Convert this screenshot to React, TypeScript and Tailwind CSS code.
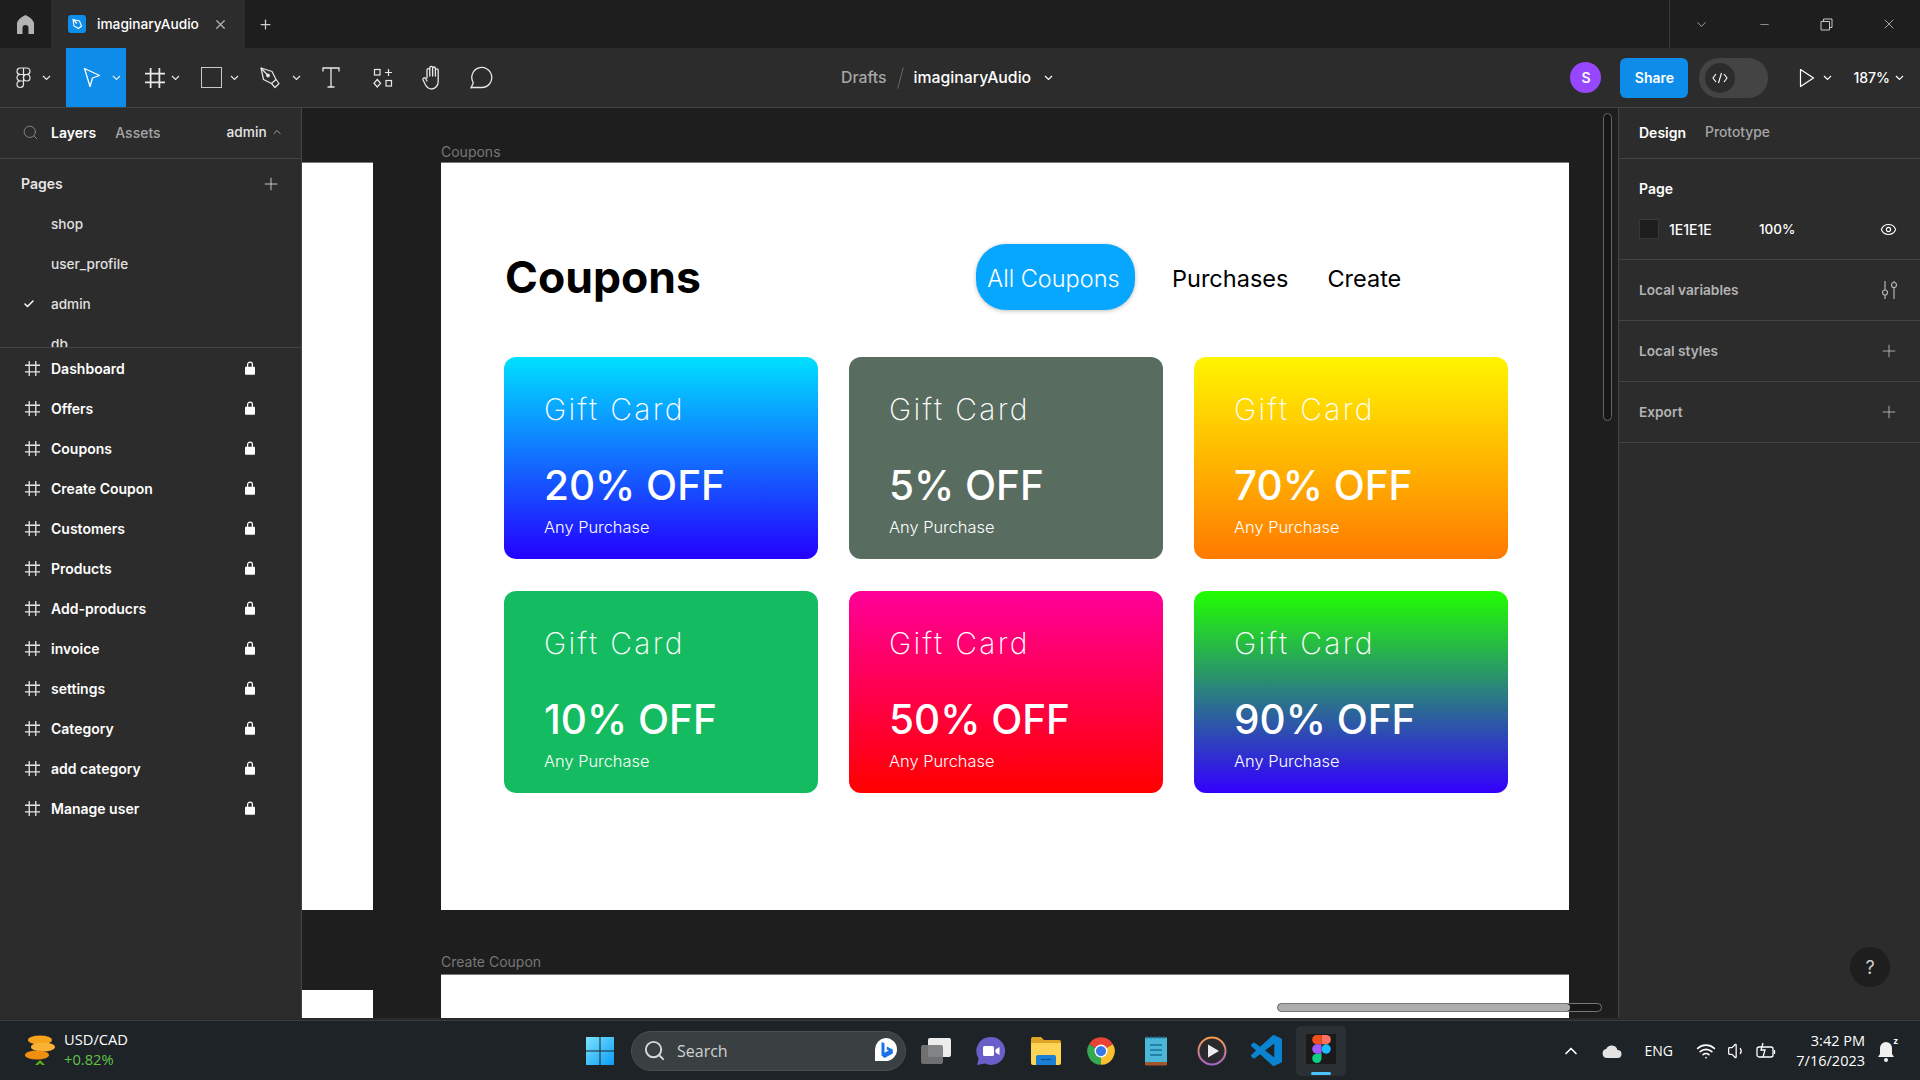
import { X, Plus, Search, Check, ChevronDown, ChevronUp, Eye, Minus, Wifi, Volume1 } from "lucide-react";

const pages = ["shop", "user_profile", "admin", "db"];
const layers = ["Dashboard", "Offers", "Coupons", "Create Coupon", "Customers", "Products", "Add-producrs", "invoice", "settings", "Category", "add category", "Manage user"];

const cards = [
  { off: "20% OFF", bg: "bg-linear-to-b/srgb from-[#00e0ff] to-[#2400ff]" },
  { off: "5% OFF", bg: "bg-[#586d60]" },
  { off: "70% OFF", bg: "bg-linear-to-b/srgb from-[#fff500] to-[#ff7a00]" },
  { off: "10% OFF", bg: "bg-[#14bb60]" },
  { off: "50% OFF", bg: "bg-linear-to-b/srgb from-[#ff0099] to-[#ff0000]" },
  { off: "90% OFF", bg: "bg-linear-to-b/srgb from-[#22ff00] to-[#3300ff]" },
];

function Chev({ className = "" }: { className?: string }) {
  return (
    <svg width="9" height="6" viewBox="0 0 9 6" fill="none" stroke="currentColor" strokeWidth="1.2" className={className}>
      <path d="M1 1l3.5 3.5L8 1" />
    </svg>
  );
}

function FrameIcon({ size = 16, stroke = 1.2 }: { size?: number; stroke?: number }) {
  return (
    <svg width={size} height={size} viewBox="0 0 16 16" fill="none" stroke="currentColor" strokeWidth={stroke}>
      <path d="M4.5 0v16M11.5 0v16M0 4.5h16M0 11.5h16" />
    </svg>
  );
}

function LockIcon() {
  return (
    <svg width="10" height="14" viewBox="0 0 10 14" fill="white">
      <path d="M2.6 6V3.6a2.4 2.4 0 0 1 4.8 0V6" fill="none" stroke="white" strokeWidth="1.3" />
      <rect y="5.8" width="10" height="8" rx="0.8" />
    </svg>
  );
}

function FigmaOutline() {
  return (
    <svg width="15" height="22" viewBox="0 0 15 22" fill="none" stroke="#e6e6e6" strokeWidth="1.2">
      <path d="M7.5 1H4.25a3.25 3.25 0 0 0 0 6.5H7.5V1zM7.5 1h3.25a3.25 3.25 0 0 1 0 6.5H7.5M7.5 7.5H4.25a3.25 3.25 0 0 0 0 6.5H7.5V7.5zM7.5 14H4.25a3.25 3.25 0 1 0 3.25 3.25V14z" />
      <circle cx="10.75" cy="10.75" r="3.25" />
    </svg>
  );
}

function FigmaColor() {
  return (
    <svg width="19" height="28" viewBox="0 0 38 57">
      <path fill="#1abcfe" d="M19 28.5a9.5 9.5 0 1 1 19 0 9.5 9.5 0 0 1-19 0z" />
      <path fill="#0acf83" d="M0 47.5A9.5 9.5 0 0 1 9.5 38H19v9.5a9.5 9.5 0 1 1-19 0z" />
      <path fill="#ff7262" d="M19 0v19h9.5a9.5 9.5 0 1 0 0-19H19z" />
      <path fill="#f24e1e" d="M0 9.5A9.5 9.5 0 0 0 9.5 19H19V0H9.5A9.5 9.5 0 0 0 0 9.5z" />
      <path fill="#a259ff" d="M0 28.5A9.5 9.5 0 0 0 9.5 38H19V19H9.5A9.5 9.5 0 0 0 0 28.5z" />
    </svg>
  );
}

function Tool({ w, children, chev }: { w: string; children: React.ReactNode; chev?: boolean }) {
  return (
    <div className={`flex h-full items-center justify-center text-[#e8e8e8] ${w}`}>
      {children}
      {chev && <Chev />}
    </div>
  );
}

function Toolbar() {
  return (
    <div className="flex h-[60px] items-center border-b border-[#444] bg-[#2c2c2c] text-white">
      <Tool w="w-[66px] gap-[11px]" chev>
        <FigmaOutline />
      </Tool>
      <Tool w="w-[60px] gap-[11px] bg-[#0d8ce9] pl-[11px]" chev>
        <svg width="18" height="22" viewBox="0 0 18 22" fill="none" stroke="white" strokeWidth="1.3" strokeLinejoin="round">
          <path d="M1.5 1.5L16.5 8.5 9.5 11l-2.5 8.5z" />
        </svg>
      </Tool>
      <Tool w="w-[64px] gap-[6px] pl-[8px]" chev>
        <FrameIcon size={20} stroke={1.4} />
      </Tool>
      <Tool w="w-[60px] gap-[8px]" chev>
        <div className="size-[21px] border-[1.5px] border-[#c9c9c9]" />
      </Tool>
      <Tool w="w-[60px] gap-[11px]" chev>
        <svg width="21" height="22" viewBox="0 0 21 22" fill="none" stroke="#e8e8e8" strokeWidth="1.2" strokeLinejoin="round">
          <path d="M1 1l11 3.5 4 8-4.5 4-8-4z" />
          <path d="M1 1l6.5 7" />
          <circle cx="8" cy="8.5" r="1.3" fill="#e8e8e8" />
          <path d="M11.5 16.5l3.5 4 4-4-3-4" />
        </svg>
      </Tool>
      <Tool w="w-[42px]">
        <svg width="18" height="21" viewBox="0 0 18 21" fill="none" stroke="#e8e8e8" strokeWidth="1.3">
          <path d="M1 4.5V1h16v3.5M9 1v19M5.5 20h7" />
        </svg>
      </Tool>
      <Tool w="w-[50px] ml-[6px]">
        <svg width="20" height="20" viewBox="0 0 20 20" fill="none" stroke="#e8e8e8" strokeWidth="1.2">
          <rect x="1.5" y="1.5" width="5.5" height="5.5" />
          <path d="M15.5 1v7M12 4.5h7" />
          <path d="M4.25 11.5l3.3 3.75-3.3 3.75-3.3-3.75z" />
          <rect x="13" y="12.5" width="5.5" height="5.5" />
        </svg>
      </Tool>
      <Tool w="w-[48px] ml-[1px]">
        <svg width="24" height="25" viewBox="0 0 24 25" fill="none" stroke="#e8e8e8" strokeWidth="1.3" strokeLinecap="round" strokeLinejoin="round">
          <path d="M6 13V5a1.4 1.4 0 0 1 2.8 0v6M8.8 11V2.8a1.4 1.4 0 0 1 2.8 0V11M11.6 11V3.4a1.4 1.4 0 0 1 2.8 0V11M14.4 11V5.2a1.4 1.4 0 0 1 2.8 0v11c0 4.5-3 7.8-6.6 7.8-3 0-4.6-1.6-6-4L2 14.8c-.7-1.6 1.6-2.8 2.6-1.3L6 16" />
        </svg>
      </Tool>
      <Tool w="w-[50px] -ml-px">
        <svg width="23" height="23" viewBox="0 0 23 23" fill="none" stroke="#e8e8e8" strokeWidth="1.3" strokeLinejoin="round">
          <path d="M1 22l2.3-5.2A10 10 0 1 1 12 21.5H1z" />
        </svg>
      </Tool>

      <div className="ml-[335px] flex items-center text-[15.8px] font-medium">
        <span className="text-[#a6a6a6]">Drafts</span>
        <span className="mx-[13px] h-[22px] w-px rotate-[15deg] bg-[#666]" />
        <span className="text-white">imaginaryAudio</span>
        <Chev className="ml-[13px]" />
      </div>

      <div className="ml-auto flex items-center">
        <div className="flex size-[31px] items-center justify-center rounded-full bg-[#9747ff] text-[14px] font-semibold">S</div>
        <button className="ml-[19px] h-[40px] w-[68px] rounded-[6px] bg-[#0d8ce9] text-[14px] font-semibold">Share</button>
        <div className="ml-[11px] flex h-[40px] w-[69px] items-center rounded-full bg-[#444] pl-[6px]">
          <div className="flex size-[30px] items-center justify-center rounded-full bg-[#2c2c2c]">
            <svg width="16" height="12" viewBox="0 0 16 12" fill="none" stroke="white" strokeWidth="1.1">
              <path d="M4 2L1 6l3 4M12 2l3 4-3 4M9.5 1L6.5 11" />
            </svg>
          </div>
        </div>
        <svg width="16" height="20" viewBox="0 0 16 20" fill="none" stroke="white" strokeWidth="1.2" strokeLinejoin="round" className="ml-[31px]">
          <path d="M1.5 1.5L14.5 10 1.5 18.5z" />
        </svg>
        <Chev className="ml-[8px]" />
        <span className="ml-[21px] text-[14px] font-medium">187%</span>
        <Chev className="ml-[5px] mr-[16px]" />
      </div>
    </div>
  );
}

function TitleBar() {
  return (
    <div className="flex h-[48px] items-center bg-[#1e1e1e] text-white">
      <div className="flex w-[51px] justify-center">
        <svg width="17" height="19" viewBox="0 0 17 19" fill="#b3b3b3">
          <path fillRule="evenodd" d="M8.5 0C5 1.5 1 4.5 0 8v11h5.5v-6a3 3 0 0 1 6 0v6H17V8C16 4.5 12 1.5 8.5 0z" />
        </svg>
      </div>
      <div className="flex h-full w-[194px] items-center bg-[#2c2c2c] pl-[17px]">
        <div className="flex size-[18px] items-center justify-center rounded-[3px] bg-[#0d8ce9]">
          <svg width="12" height="12" viewBox="0 0 12 12" fill="none" stroke="white" strokeWidth="1.1">
            <path d="M2 1.5l6.5 1.5 2 5-3 2.5-4.5-2.5zM2 1.5l4 4" />
          </svg>
        </div>
        <span className="ml-[11px] text-[13.7px] font-medium">imaginaryAudio</span>
        <X size={15} className="ml-[14px] text-[#b3b3b3]" strokeWidth={2} />
      </div>
      <Plus size={15} className="ml-[13px] text-[#d0d0d0]" strokeWidth={2} />
      <div className="ml-auto flex h-full w-[251px] items-center border-l border-[#383838] text-[#c8c8c8]">
        <ChevronDown size={15} strokeWidth={1.2} className="ml-[24px]" />
        <Minus size={13} strokeWidth={1.2} className="ml-[49px]" />
        <svg width="13" height="13" viewBox="0 0 13 13" fill="none" stroke="currentColor" className="ml-[49px]">
          <path d="M1 3.5h8.5V12H1zM3.5 3.5V1H12v8.5H9.5" />
        </svg>
        <X size={16} strokeWidth={1.2} className="ml-[48px]" />
      </div>
    </div>
  );
}

function Sidebar() {
  return (
    <div className="relative flex w-[302px] shrink-0 flex-col border-r border-[#444] bg-[#2c2c2c] text-[14px]">
      <div className="flex h-[51px] shrink-0 items-center border-b border-[#444] pb-[2px] pl-[22px]">
        <Search size={17} className="text-[#8c8c8c]" strokeWidth={1.3} />
        <span className="ml-[12px] font-semibold text-white">Layers</span>
        <span className="ml-[19px] font-medium text-[#a6a6a6]">Assets</span>
        <span className="ml-[66px] text-[13.7px] font-medium text-[#e6e6e6]">admin</span>
        <ChevronUp size={12} className="ml-[4px] text-[#a6a6a6]" />
      </div>
      <div className="flex h-[45px] shrink-0 items-center justify-between pl-[21px] pr-[20px] pt-[4px]">
        <span className="font-semibold text-[#e6e6e6]">Pages</span>
        <Plus size={20} strokeWidth={1} className="text-[#e6e6e6]" />
      </div>
      <div className="h-[144px] shrink-0 overflow-hidden border-b border-[#444]">
        {pages.map((p) => (
          <div key={p} className="relative flex h-[40px] items-center pl-[51px] text-[13.6px] font-medium text-[#e0e0e0]">
            {p === "admin" && <Check size={12} strokeWidth={3} className="absolute left-[23px] text-white" />}
            {p}
          </div>
        ))}
      </div>
      {layers.map((l) => (
        <div key={l} className="flex h-[40px] shrink-0 items-center pl-[25px] font-semibold text-white">
          <span className="text-[#e6e6e6]">
            <FrameIcon size={15} stroke={1.4} />
          </span>
          <span className="ml-[11px] w-[194px]">{l}</span>
          <LockIcon />
        </div>
      ))}
    </div>
  );
}

function Card({ off, bg }: { off: string; bg: string }) {
  return (
    <div className={`flex h-[202px] flex-col rounded-[12px] pl-[40px] text-white ${bg}`}>
      <div className="mt-[34px] text-[30px] font-[250] leading-[36px] tracking-[2.3px]">Gift Card</div>
      <div className="mt-[29px] text-[40.5px] font-[450] leading-[60px]">{off}</div>
      <div className="-mt-px text-[16.4px] font-light leading-[24px]">Any Purchase</div>
    </div>
  );
}

function Canvas() {
  return (
    <div className="relative flex-1 overflow-hidden bg-[#1e1e1e]">
      <div className="absolute left-0 top-[54px] h-[748px] w-[71px] border-t border-[#777] bg-white" />
      <div className="absolute left-0 top-[882px] h-[40px] w-[71px] bg-white" />

      <div className="absolute left-[139px] top-[33px] text-[14px] text-[#777]">Coupons</div>
      <div className="absolute left-[139px] top-[54px] h-[748px] w-[1128px] border-t border-[#777] bg-white px-[63px] pt-[81px] text-black">
        <div className="flex h-[66px] items-center">
          <h1 className="w-[472px] pl-[1px] pt-[1px] text-[44.5px] font-bold leading-none">Coupons</h1>
          <div className="flex h-full w-[159px] items-center justify-center rounded-[30px] bg-[#08a7ff] pr-[4px] pt-[4px] text-[23.5px] font-light text-white shadow-[0_1px_4px_rgba(0,0,0,0.25)]">All Coupons</div>
          <div className="ml-[37px] pt-[4px] text-[23.5px] font-normal">Purchases</div>
          <div className="ml-[39px] pt-[4px] text-[23.5px] font-normal">Create</div>
        </div>
        <div className="mt-[47px] grid grid-cols-[repeat(3,314px)] gap-x-[31px] gap-y-[32px]">
          {cards.map((c) => (
            <Card key={c.off} off={c.off} bg={c.bg} />
          ))}
        </div>
      </div>

      <div className="absolute left-[139px] top-[843px] text-[14px] text-[#777]">Create Coupon</div>
      <div className="absolute left-[139px] top-[866px] h-[60px] w-[1128px] border-t border-[#777] bg-white" />

      {/* scrollbars over the canvas */}
      <div className="absolute left-[1301px] top-[5px] h-[308px] w-[9px] rounded-full border border-[#666] bg-[#161616]" />
      <div className="absolute left-[975px] top-[895px] h-[9px] w-[325px] rounded-full border border-[#777] bg-[#161616]">
        <div className="h-full w-[292px] rounded-full bg-[#adadad]" />
      </div>
    </div>
  );
}

function PanelRow({ label, children }: { label: string; children: React.ReactNode }) {
  return (
    <div className="flex h-[61px] items-center justify-between border-b border-[#444] pl-[20px] pr-[21px] text-[13.7px] font-semibold text-[#b3b3b3]">
      <span>{label}</span>
      {children}
    </div>
  );
}

function RightPanel() {
  return (
    <div className="relative flex w-[302px] shrink-0 flex-col border-l border-[#444] bg-[#2c2c2c] text-[14px]">
      <div className="flex h-[51px] items-center border-b border-[#444] pb-[2px] pl-[20px]">
        <span className="font-semibold text-white">Design</span>
        <span className="ml-[19px] pt-px text-[13.8px] font-medium text-[#a6a6a6]">Prototype</span>
      </div>
      <div className="h-[101px] border-b border-[#444] pl-[20px]">
        <div className="mt-[20px] font-semibold leading-[20px] text-white">Page</div>
        <div className="mt-[20px] flex h-[20px] items-center font-medium text-white">
          <div className="size-[20px] border border-[#383838] bg-[#1e1e1e]" />
          <span className="ml-[10px] w-[90px]">1E1E1E</span>
          <span className="text-[13.5px]">100%</span>
          <Eye size={17} strokeWidth={1.6} className="ml-[85px] text-white" />
        </div>
      </div>
      <PanelRow label="Local variables">
        <svg width="16" height="18" viewBox="0 0 16 18" fill="none" stroke="#b3b3b3" strokeWidth="1.2" className="mr-px">
          <path d="M3 0v9M3 14v4M12 0v1M12 7v11" />
          <circle cx="3" cy="11.5" r="2.5" />
          <circle cx="12" cy="4" r="2.5" />
        </svg>
      </PanelRow>
      <PanelRow label="Local styles">
        <Plus size={20} strokeWidth={1} className="text-[#c4c4c4]" />
      </PanelRow>
      <PanelRow label="Export">
        <Plus size={20} strokeWidth={1} className="text-[#c4c4c4]" />
      </PanelRow>
      <div className="absolute left-[231px] top-[839px] flex size-[40px] items-center justify-center rounded-full bg-[#1e1e1e] text-[18px] text-[#d0d0d0]">?</div>
    </div>
  );
}

function TaskIcons() {
  return (
    <div className="flex items-center">
      {/* Start */}
      <svg width="30" height="30" viewBox="0 0 30 30" className="ml-[585px]">
        <defs>
          <linearGradient id="win" x1="0" y1="0" x2="1" y2="1">
            <stop offset="0" stopColor="#7de3ff" />
            <stop offset="1" stopColor="#0a9cf5" />
          </linearGradient>
        </defs>
        <path fill="url(#win)" d="M1 1h13.5v13.5H1zM15.5 1H29v13.5H15.5zM1 15.5h13.5V29H1zM15.5 15.5H29V29H15.5z" />
      </svg>
      <div className="ml-[16px] flex h-[40px] w-[275px] items-center rounded-full border border-[#4a4f52] bg-[#3a4042] pl-[11px] font-['Open_Sans',sans-serif] text-[16px] text-[#cfd2d3]">
        <Search size={23} strokeWidth={2} className="text-[#d8d8d8]" />
        <span className="ml-[11px]">Search</span>
        <svg width="25" height="27" viewBox="0 0 25 27" className="ml-[145px]">
          <path fill="white" d="M12.5 1a11.5 11.5 0 0 1 0 23H2v-11.5A11.5 11.5 0 0 1 12.5 1z" />
          <path fill="#1a73e8" d="M8.5 5l3 1.2v9.5l4.2-2.3-2-1 .1-3 6 3v4L11.5 21 8.5 18.6z" />
        </svg>
      </div>
      <div className="relative ml-[15px] h-[26px] w-[30px]">
        <div className="absolute right-0 top-0 h-[19px] w-[23px] rounded-[2px] bg-[#ececec]" />
        <div className="absolute bottom-0 left-0 h-[19px] w-[22px] rounded-[2px] bg-[#77797b]/90" />
      </div>
      {/* Meet */}
      <svg width="30" height="30" viewBox="0 0 30 30" className="ml-[25px]">
        <path fill="#6a5fc8" d="M15 1a14 14 0 1 1-6 26.6L1 29l1.6-6.5A14 14 0 0 1 15 1z" />
        <rect x="7" y="10" width="11" height="10" rx="1.5" fill="white" />
        <path fill="white" d="M19.5 13.5l4-2.5v8l-4-2.5z" />
      </svg>
      {/* Explorer */}
      <svg width="30" height="28" viewBox="0 0 30 28" className="ml-[25px]">
        <path fill="#e0a526" d="M0 2a2 2 0 0 1 2-2h8l3 3h15a2 2 0 0 1 2 2v4H0z" />
        <path fill="#fed456" d="M0 6h30v20a2 2 0 0 1-2 2H2a2 2 0 0 1-2-2z" />
        <path fill="#1c7fd6" d="M5 20a2 2 0 0 1 2-2h16a2 2 0 0 1 2 2v8H5z" />
        <path stroke="#0f4f8f" strokeWidth="1.2" d="M10 22.5h10" />
      </svg>
      {/* Chrome */}
      <svg width="30" height="30" viewBox="0 0 24 24" className="ml-[25px]">
        <path fill="#ea4335" d="M12 12L2.47 6.5A11 11 0 0 1 21.53 6.5z" />
        <path fill="#fbc02d" d="M12 12L21.53 6.5A11 11 0 0 1 12 23z" />
        <path fill="#34a853" d="M12 12L12 23A11 11 0 0 1 2.47 6.5z" />
        <circle cx="12" cy="12" r="5.2" fill="white" />
        <circle cx="12" cy="12" r="4.1" fill="#3b78e7" />
      </svg>
      {/* Notepad */}
      <svg width="22" height="30" viewBox="0 0 22 30" className="ml-[29px]">
        <rect y="1.5" width="22" height="26" fill="#4ab6d8" />
        <rect y="26" width="22" height="3.5" rx="1" fill="#a5552a" />
        <path stroke="#1d6f96" strokeWidth="1.6" d="M5 9h12M5 14h12M5 19h12" />
        <path stroke="#1d6f96" strokeWidth="2" strokeDasharray="2 2.2" d="M1 1.5h20" />
      </svg>
      {/* Media player */}
      <svg width="30" height="30" viewBox="0 0 30 30" className="ml-[30px]">
        <defs>
          <linearGradient id="mp" x1="0" y1="0" x2="0" y2="1">
            <stop offset="0" stopColor="#f59a4b" />
            <stop offset="1" stopColor="#a765c9" />
          </linearGradient>
        </defs>
        <circle cx="15" cy="15" r="13.5" fill="#2a2a2e" stroke="url(#mp)" strokeWidth="2" />
        <path fill="#ececec" d="M11 8.5l11 6.5-11 6.5z" />
      </svg>
      {/* VS Code */}
      <svg width="31" height="31" viewBox="0 0 24 24" className="ml-[24px]">
        <path fill="#0a84d0" d="M23.15 2.587L18.21.21a1.494 1.494 0 0 0-1.705.29l-9.46 8.63-4.12-3.128a.999.999 0 0 0-1.276.057L.327 7.261A1 1 0 0 0 .326 8.74L3.899 12 .326 15.26a1 1 0 0 0 .001 1.479L1.65 17.94a.999.999 0 0 0 1.276.057l4.12-3.128 9.46 8.63a1.492 1.492 0 0 0 1.704.29l4.942-2.377A1.5 1.5 0 0 0 24 20.06V3.939a1.5 1.5 0 0 0-.85-1.352zm-5.146 14.861L10.826 12l7.178-5.448v10.896z" />
      </svg>
      {/* Figma, active */}
      <div className="relative ml-[14px] flex h-[50px] w-[50px] items-center justify-center rounded-[5px] bg-[#2b3034]">
        <div className="mb-[4px] flex h-[30px] w-[30px] items-center justify-center bg-[#1a1a1a]">
          <FigmaColor />
        </div>
        <div className="absolute bottom-[1px] left-[15px] h-[3px] w-[20px] rounded-full bg-[#4cc2ff]" />
      </div>
    </div>
  );
}

function Taskbar() {
  return (
    <div className="relative flex h-[60px] items-center border-t border-[#3a3d3f] bg-[#1e2327] font-['Open_Sans',sans-serif] text-white">
      <div className="absolute left-[25px] top-[14px]">
        <svg width="30" height="32" viewBox="0 0 30 32">
          <ellipse cx="15" cy="5" rx="12" ry="4.5" fill="#f7a21b" />
          <ellipse cx="18" cy="12" rx="12" ry="4.5" fill="#f9b233" />
          <ellipse cx="12" cy="20" rx="12" ry="4.5" fill="#ee8f10" />
          <path d="M15 25l5 5h-3l-2-2-2 2h-3z" fill="#5bb318" />
        </svg>
      </div>
      <div className="absolute left-[64px] top-[8px] text-[14.7px] leading-[20px]">
        <div>USD/CAD</div>
        <div className="text-[#62c24a]">+0.82%</div>
      </div>

      <TaskIcons />

      <div className="ml-auto flex items-center">
        <ChevronUp size={20} strokeWidth={2} />
        <svg width="20" height="14" viewBox="0 0 20 14" className="ml-[21px]">
          <path fill="#e3e3e3" d="M5 14a4.5 4.5 0 0 1-.8-8.9A6 6 0 0 1 15.5 6 4 4 0 0 1 15.5 14z" />
        </svg>
        <span className="ml-[23px] text-[14px]">ENG</span>
        <Wifi size={20} strokeWidth={2} className="ml-[23px]" />
        <Volume1 size={20} strokeWidth={1.5} className="ml-[11px]" />
        <svg width="20" height="20" viewBox="0 0 20 20" fill="none" stroke="white" strokeWidth="1.3" className="ml-[9px]">
          <rect x="1" y="6" width="16" height="10" rx="2" />
          <path d="M18.5 9v4" />
          <path d="M7 2l-2 7h4l-2 7" fill="none" />
        </svg>
        <div className="ml-[9px] w-[80px] text-right text-[14.5px] leading-[20px]">
          <div>3:42 PM</div>
          <div>7/16/2023</div>
        </div>
        <div className="relative ml-[12px] mr-[25px] h-[24px] w-[18px]">
          <svg width="18" height="24" viewBox="0 0 18 24" fill="#f0f0f0">
            <path d="M9 3a6 6 0 0 1 6 6v6l2 3H1l2-3V9a6 6 0 0 1 6-6z" />
            <circle cx="9" cy="21" r="2" />
          </svg>
          <span className="absolute -right-[3px] -top-[3px] text-[9px] font-bold leading-none">z</span>
        </div>
      </div>
    </div>
  );
}

export default function App() {
  return (
    <div className="flex h-[1080px] w-[1920px] flex-col overflow-hidden bg-[#1e1e1e] font-['Inter',sans-serif]">
      <TitleBar />
      <Toolbar />
      <div className="flex h-[910px] shrink-0">
        <Sidebar />
        <Canvas />
        <RightPanel />
      </div>
      <div className="h-[2px] shrink-0 bg-[#262a2d]" />
      <Taskbar />
    </div>
  );
}
